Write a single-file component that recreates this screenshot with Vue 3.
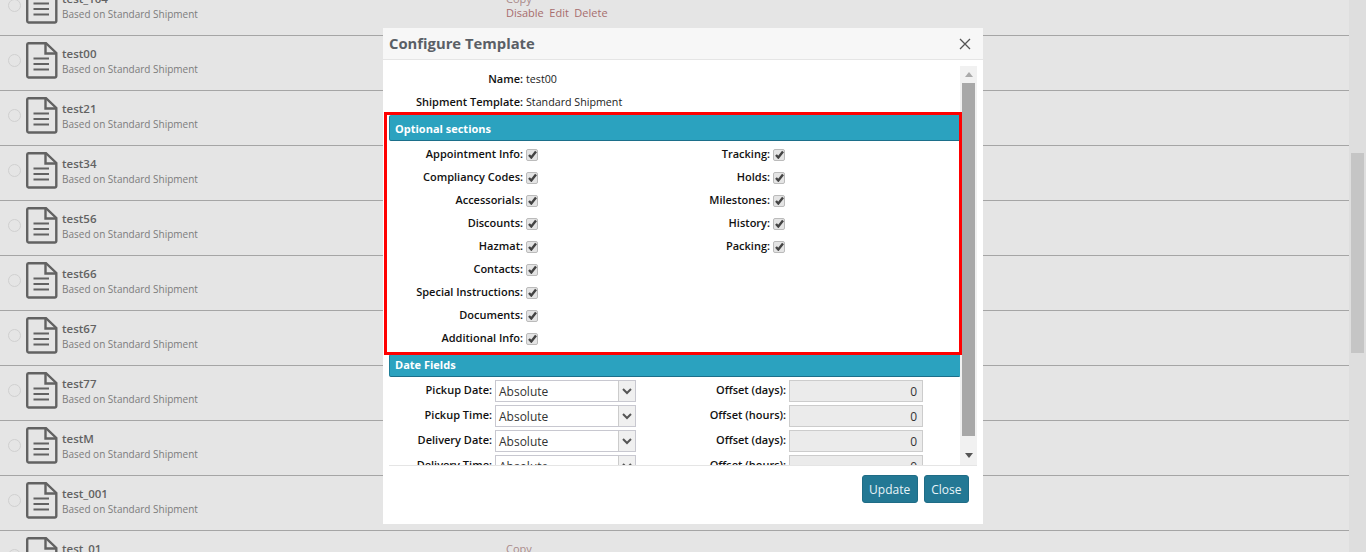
<script setup>
const rows = ['test_104','test00','test21','test34','test56','test66','test67','test77','testM','test_001','test_01']
const left = ['Appointment Info','Compliancy Codes','Accessorials','Discounts','Hazmat','Contacts','Special Instructions','Documents','Additional Info']
const right = ['Tracking','Holds','Milestones','History','Packing']
const dates = [['Pickup Date','Offset (days)'],['Pickup Time','Offset (hours)'],['Delivery Date','Offset (days)'],['Delivery Time','Offset (hours)']]
</script>

<template>
  <div class="page">
    <div class="list-wrap">
      <div class="list">
        <div v-for="r in rows" :key="r" class="row">
          <span class="radio"></span>
          <svg class="doc" width="32" height="37" viewBox="0 0 32 37" fill="none" stroke="#626262" stroke-width="2.400">
            <path d="M2.500 1.200H20L30.300 11V34a1.500 1.500 0 0 1-1.500 1.500H2.500A1.500 1.500 0 0 1 1.200 34V2.700A1.500 1.500 0 0 1 2.500 1.200Z"/>
            <path d="M19.500 1.200V11.500H30.300"/>
            <path d="M7.500 16.500H23M7.500 22H23M7.500 27.500H23" stroke-width="2.200"/>
          </svg>
          <div class="row-text">
            <div class="row-name">{{ r }}</div>
            <div class="row-sub">Based on Standard Shipment</div>
          </div>
          <div class="row-actions">
            <div>Copy</div>
            <div class="links"><span>Disable</span><span>Edit</span><span>Delete</span></div>
          </div>
        </div>
      </div>
    </div>
    <div class="page-bar"><div class="page-thumb"></div></div>

    <div class="modal">
      <div class="modal-head">
        <span class="modal-title">Configure Template</span>
        <svg class="close-x" width="12" height="12" viewBox="0 0 12 12" stroke="#555" stroke-width="1.300" fill="none"><path d="M1 1L11 11M11 1L1 11"/></svg>
      </div>
      <div class="modal-body">
        <div class="scroll">
          <div class="info"><span class="lbl">Name:</span><span>test00</span></div>
          <div class="info"><span class="lbl">Shipment Template:</span><span>Standard Shipment</span></div>
          <div class="section first">Optional sections</div>
          <div class="options">
            <div class="col">
              <div v-for="l in left" :key="l" class="opt">
                <span class="lbl">{{ l }}:</span>
                <span class="check"><svg width="9" height="9" viewBox="0 0 9 9"><path d="M1 5L3.300 7.500L8 1.500" fill="none" stroke="#444" stroke-width="2.400"/></svg></span>
              </div>
            </div>
            <div class="col">
              <div v-for="l in right" :key="l" class="opt">
                <span class="lbl">{{ l }}:</span>
                <span class="check"><svg width="9" height="9" viewBox="0 0 9 9"><path d="M1 5L3.300 7.500L8 1.500" fill="none" stroke="#444" stroke-width="2.400"/></svg></span>
              </div>
            </div>
          </div>
          <div class="section second">Date Fields</div>
          <div class="dates">
            <div v-for="d in dates" :key="d[0]" class="date-row">
              <span class="lbl d1">{{ d[0] }}:</span>
              <div class="select">
                <span class="sel-text">Absolute</span>
                <span class="sel-arrow"><svg width="10" height="7" viewBox="0 0 10 7"><path d="M1 1L5 5L9 1" fill="none" stroke="#555" stroke-width="2"/></svg></span>
              </div>
              <span class="lbl d2">{{ d[1] }}:</span>
              <div class="num">0</div>
            </div>
          </div>
        </div>
        <div class="modal-bar">
          <svg class="arr" width="8" height="5" viewBox="0 0 8 5"><path d="M4 0L8 5H0Z" fill="#aaa"/></svg>
          <div class="modal-thumb"></div>
          <svg class="arr down" width="8" height="5" viewBox="0 0 8 5"><path d="M4 5L8 0H0Z" fill="#555"/></svg>
        </div>
      </div>
      <div class="modal-foot">
        <button class="btn">Update</button>
        <button class="btn">Close</button>
      </div>
      <div class="highlight"></div>
    </div>
  </div>
</template>

<style>
html, body { margin: 0; overflow: hidden; }
</style>

<style scoped>
.page {
  width: 1366px; height: 552px; position: relative; overflow: hidden; display: flex;
  background: #e5e5e5; font-family: "Open Sans", sans-serif; color: #222;
}
.list-wrap { flex: 1; overflow: hidden; }
.list { margin-top: -19px; }
.row {
  height: 55px; box-sizing: border-box; border-bottom: 1px solid #a5a5a5; display: flex; align-items: center; position: relative; padding: 0 0 6px 8px;
}
.radio { width: 11px; height: 11px; border: 1px solid #d0d0d0; border-radius: 50%; margin-right: 5px; flex: none; }
.doc { margin-right: 4px; flex: none; }
.row-text { width: 444px; padding-top: 2px; }
.row-name { font-size: 11.500px; font-weight: 600; color: #626262; line-height: 16px; }
.row-sub { font-size: 10px; color: #7c7c7c; line-height: 15px; }
.row-actions { font-size: 11px; color: #a98a8a; line-height: 14px; padding-top: 2px; }
.links { display: flex; gap: 5.500px; color: #a76d6d; }
.page-bar { width: 17px; background: #dedede; flex: none; }
.page-thumb { width: 13px; height: 200px; margin: 153px 0 0 2px; background: #c5c5c5; }

.modal {
  position: absolute; left: 383px; top: 28px; width: 600px; height: 496px; background: #fff;
  display: flex; flex-direction: column;
}
.modal-head {
  height: 32px; box-sizing: border-box; background: #f7f7f7; border-bottom: 1px solid #e5e5e5; display: flex; align-items: center;
  justify-content: space-between; padding: 0 12px 2px 6px; flex: none;
}
.close-x { margin-top: 2px; }
.modal-title { font-size: 14.800px; font-weight: 700; color: #5a5f66; }
.modal-body { height: 405px; display: flex; padding: 6px 6px 0 6px; box-sizing: border-box; flex: none; position: relative; }
.scroll { width: 571px; height: 399px; overflow: hidden; font-size: 10.700px; flex: none; }
.lbl { font-weight: 600; font-size: 11px; color: #111; text-align: right; }
.info { display: flex; gap: 3px; height: 23px; align-items: center; }
.info .lbl { width: 134px; }
.info:first-child { margin-top: 1px; }
.section {
  height: 26px; line-height: 25px; box-sizing: border-box; background: #2ba2bf; border: 1px solid #2ba2bf; border-bottom-color: #1c6f8a;
  border-left-color: #1f7f99; color: #fff; font-weight: 700; font-size: 11px; padding-left: 5px; border-radius: 2px 0 0 2px;
}
.section.first { margin-top: 2px; }
.section.second { height: 23px; line-height: 20px; }
.options { display: flex; height: 213px; box-sizing: border-box; padding-top: 2px; }
.col { width: 247px; }
.opt { display: flex; height: 23px; align-items: center; gap: 3px; }
.opt .lbl { width: 134px; padding-bottom: 2px; }
.check {
  width: 10px; height: 10px; border: 1px solid #bbb; border-radius: 2px; background: #e4e4e4;
  display: flex; align-items: center; justify-content: center;
}
.dates { padding-top: 3px; }
.date-row { display: flex; height: 25px; align-items: flex-start; }
.d1 { width: 103px; line-height: 19px; margin-right: 3px; flex: none; }
.d2 { width: 150px; line-height: 19px; margin-right: 3px; flex: none; }
.select {
  width: 141px; height: 22px; box-sizing: border-box; border: 1px solid #c8c8d0; display: flex; background: #fff; flex: none;
}
.sel-text { flex: 1; padding-left: 3px; font-size: 12px; line-height: 20px; color: #333; margin-top: 1px; }
.sel-arrow { width: 16px; background: #f0f0f0; border-left: 1px solid #ccc; display: flex; align-items: center; justify-content: center; }
.num {
  width: 134px; height: 22px; box-sizing: border-box; border: 1px solid #ccc; background: #ebebeb; flex: none;
  text-align: right; padding-right: 5px; font-size: 12px; line-height: 21px; color: #333;
}
.modal-bar {
  width: 17px; height: 399px; background: #f1f1f1; flex: none; display: flex; flex-direction: column; align-items: center;
}
.arr { margin: 6px 0; flex: none; }
.arr.down { margin: auto 0 7px; }
.modal-thumb { width: 13px; height: 353px; background: #a8a8a8; margin-top: 0; flex: none; }
.modal-foot {
  margin: 0 6px; border-top: 1px solid #e5e5e5; padding: 9px 8px 0 0; display: flex; justify-content: flex-end; gap: 6px;
}
.btn {
  height: 28px; padding: 0 6.500px; background: #237894; border: 1px solid #1f6c86; border-radius: 3px; color: #e8f4f8;
  font-family: "Open Sans", sans-serif; font-size: 12px;
}
.highlight {
  position: absolute; left: 1px; top: 84px; width: 572px; height: 237px; border: 3px solid #f00; pointer-events: none;
}
</style>
